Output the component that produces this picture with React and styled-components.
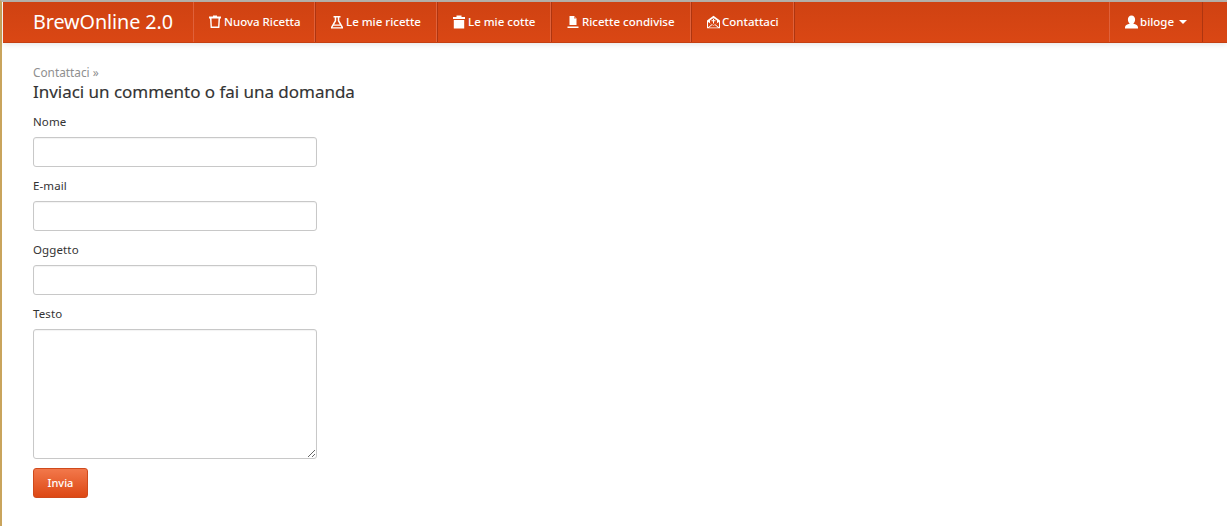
import React from 'react';
import styled, { createGlobalStyle } from 'styled-components';

const Global = createGlobalStyle`
  html, body { margin: 0; padding: 0; background: #fff; }
  body { font-family: "Noto Sans", "Open Sans", sans-serif; font-size: 12px; color: #333; }
`;

const Page = styled.div`
  min-height: 526px;
  box-sizing: border-box;
  border-left: 2px solid #c9a45c;
  border-top: 2px solid #b9b5ae;
`;

const NavBar = styled.nav`
  display: flex;
  align-items: stretch;
  box-sizing: border-box;
  height: 41px;
  margin-left: 1px;
  padding-left: 30px;
  padding-right: 24px;
  background: linear-gradient(#cf4212, #da4714);
  border-bottom: 1px solid #c53f11;
  box-shadow: 0 1px 6px rgba(0, 0, 0, 0.12);
`;

const Brand = styled.a`
  display: flex;
  align-items: center;
  width: 160px;
  padding-bottom: 1px;
  box-sizing: border-box;
  color: #fff;
  font-size: 19.8px;
  letter-spacing: -0.1px;
`;

const NavList = styled.div`
  display: flex;
  border-left: 1px solid #e0613a;
`;

const NavItem = styled.a`
  display: flex;
  align-items: center;
  gap: ${p => p.$gap ?? 3}px;
  box-sizing: border-box;
  width: ${p => p.$w}px;
  padding-left: 15px;
  padding-bottom: 1px;
  color: #fff;
  font-size: 11.5px;
  font-weight: 500;
  white-space: nowrap;
  border-right: 1px solid #ae3510;
  box-shadow: inset -1px 0 0 #e0613a;
`;

const UserMenu = styled(NavItem)`
  margin-left: auto;
  border-left: 1px solid #e0613a;
  box-shadow: none;
  gap: 2px;
`;

const Caret = styled.span`
  width: 0;
  height: 0;
  margin-left: 3px;
  border-left: 4px solid transparent;
  border-right: 4px solid transparent;
  border-top: 4px solid #fff;
`;

const Main = styled.main`
  padding: 21px 0 0 31px;
`;

const Crumb = styled.div`
  color: #8f8f8f;
  font-size: 11.8px;
  line-height: 16px;
`;

const Title = styled.h1`
  margin: 0 0 9px;
  color: #333;
  font-size: 17px;
  font-weight: 400;
  line-height: 24px;
  letter-spacing: -0.03px;
  -webkit-text-stroke: 0.15px #333;
`;

const Form = styled.form`
  display: flex;
  flex-direction: column;
  align-items: flex-start;
  width: 284px;
`;

const Label = styled.label`
  display: block;
  height: 18px;
  margin-bottom: 6px;
  font-size: 11.5px;
  line-height: 18px;
  letter-spacing: 0.12px;
  color: #333;
`;

const Input = styled.input`
  display: block;
  box-sizing: border-box;
  width: 284px;
  height: 30px;
  margin-bottom: 10px;
  padding: 4px 6px;
  background: #fff;
  border: 1px solid #c8c8c8;
  border-radius: 3px;
  box-shadow: inset 0 1px 1px rgba(0, 0, 0, 0.05);
  outline: none;
`;

const TextArea = styled.textarea`
  display: block;
  box-sizing: border-box;
  width: 284px;
  height: 130px;
  margin-bottom: 9px;
  padding: 4px 6px;
  background: #fff;
  border: 1px solid #c8c8c8;
  border-radius: 3px;
  box-shadow: inset 0 1px 1px rgba(0, 0, 0, 0.05);
  outline: none;
`;

const Submit = styled.button`
  box-sizing: border-box;
  width: 55px;
  height: 30px;
  padding: 0 0 1px;
  color: #fff;
  font-family: inherit;
  font-size: 11px;
  font-weight: 500;
  background: linear-gradient(#f2784b, #dd4814);
  border: 1px solid #cf4a1c;
  border-radius: 3px;
`;

const Icon = styled.svg`
  flex: none;
  width: ${p => p.$w ?? 12}px;
  height: 14px;
  fill: #fff;
`;

const PotIcon = () => (
  <Icon viewBox="0 0 12 14">
    <path d="M4 0.500h4v1h4v2h-1l-.6 9.500H1.600L1 3.500H0v-2h4zM2.500 3.500l.4 8h6.200l.4-8z" fillRule="evenodd" />
  </Icon>
);
const FlaskIcon = () => (
  <Icon viewBox="0 0 12 14">
    <path d="M2.500 1h7v1.500H8.300v3l3.700 6.500v1.500H0V12l3.700-6.500v-3H2.500zM5.200 2.500v3.400L3.200 9.500h5.600L6.800 5.900V2.500zM2.500 10.800l-1 1.400h9l-1-1.400z" fillRule="evenodd" />
  </Icon>
);
const BinIcon = () => (
  <Icon viewBox="0 0 12 14">
    <path d="M3.500 0.500h5v1.500H12v2H0V2h3.500zM.8 5h10.400v8.500H.8z" />
  </Icon>
);
const DocIcon = () => (
  <Icon viewBox="0 0 12 14">
    <path d="M2.500 1h4.500l2.500 2.500V10h-7zM7.300 1.800v1.700h1.700zM0.500 11.500h11v1.500H0.500z" fillRule="evenodd" />
  </Icon>
);
const MailIcon = () => (
  <Icon viewBox="0 0 13 14" $w={13}>
    <path d="M6.500 .8l6.500 4.700V13.200H0V5.500zM6.500 3L3 5.600v2.400l3.500 2.300L10 8V5.600zM6 3.800h1v1.400h1.500v1H7V8.500H6V6.200H4.500v-1H6zM1 7v5.200l3.800-3zM12 7L8.200 9.200l3.800 3zM2 12.400h9L7.800 9.900 6.500 10.800 5.200 9.900z" fillRule="evenodd" />
  </Icon>
);
const UserIcon = () => (
  <Icon viewBox="0 0 13 14" $w={13}>
    <path d="M6.500 .5c2.300 0 3.600 1.700 3.600 4S8.900 8 8.300 8.800c2.700.7 4.700 1.500 4.700 3.700v1H0v-1c0-2.200 2-3 4.700-3.700C4.100 8 2.900 6.800 2.900 4.500S4.200.5 6.500.5z" />
  </Icon>
);

const navItems = [
  { label: 'Nuova Ricetta', w: 122, icon: <PotIcon /> },
  { label: 'Le mie ricette', w: 122, icon: <FlaskIcon /> },
  { label: 'Le mie cotte', w: 114, icon: <BinIcon /> },
  { label: 'Ricette condivise', w: 140, gap: 3, icon: <DocIcon /> },
  { label: 'Contattaci', w: 103, gap: 2, icon: <MailIcon /> },
];

export default function App() {
  return (
    <Page>
      <Global />
      <NavBar>
        <Brand>BrewOnline 2.0</Brand>
        <NavList>
          {navItems.map(item => (
            <NavItem key={item.label} $w={item.w} $gap={item.gap}>
              {item.icon}
              {item.label}
            </NavItem>
          ))}
        </NavList>
        <UserMenu $w={94}>
          <UserIcon />
          biloge
          <Caret />
        </UserMenu>
      </NavBar>
      <Main>
        <Crumb>Contattaci »</Crumb>
        <Title>Inviaci un commento o fai una domanda</Title>
        <Form onSubmit={e => e.preventDefault()}>
          <Label>Nome</Label>
          <Input />
          <Label>E-mail</Label>
          <Input />
          <Label>Oggetto</Label>
          <Input />
          <Label>Testo</Label>
          <TextArea />
          <Submit>Invia</Submit>
        </Form>
      </Main>
    </Page>
  );
}
